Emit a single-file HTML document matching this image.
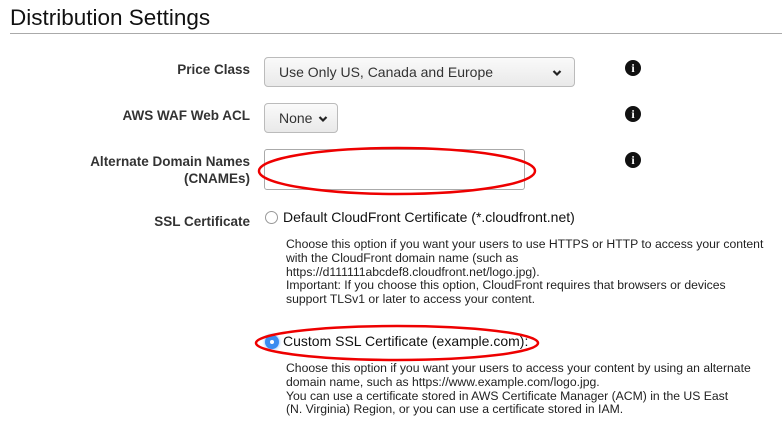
<!DOCTYPE html>
<html><head><style>
body{margin:0;width:782px;height:426px;background:#fff;font-family:"Liberation Sans",sans-serif;color:#222;position:relative;overflow:hidden}
.a{position:absolute}
.lbl{position:absolute;right:532px;font-weight:bold;font-size:13.5px;text-align:right;color:#333;line-height:17px}
.sel{position:absolute;border:1px solid #bbb;border-radius:4px;background:linear-gradient(#fafafa,#e9e9e9);font-size:14px;color:#333;box-sizing:border-box;padding-left:14px;line-height:28px}
.info{position:absolute;width:16px;height:16px;border-radius:50%;background:#111;color:#fff;font:bold 12px "Liberation Serif",serif;text-align:center;line-height:16px}
.desc{position:absolute;left:286px;font-size:12.2px;line-height:13.8px;color:#222}
.opt{position:absolute;left:283px;font-size:14px;color:#111}
</style></head><body>
<div class="a" style="left:10px;top:5px;font-size:22.5px;color:#111">Distribution Settings</div>
<div class="a" style="left:10px;top:33px;width:772px;height:1px;background:#aaa"></div>

<div class="lbl" style="top:61px">Price Class</div>
<div class="sel" style="left:264px;top:57px;width:311px;height:30px">Use Only US, Canada and Europe<svg class="a" style="right:12px;top:11px" width="10" height="8" viewBox="0 0 10 8"><path d="M1.5 2l3.5 3.5L8.5 2" stroke="#222" stroke-width="2.2" fill="none"/></svg></div>
<div class="info" style="left:625px;top:60px">i</div>

<div class="lbl" style="top:107px">AWS WAF Web ACL</div>
<div class="sel" style="left:264px;top:103px;width:74px;height:30px">None<svg class="a" style="right:9px;top:11px" width="10" height="8" viewBox="0 0 10 8"><path d="M1.5 2l3.5 3.5L8.5 2" stroke="#222" stroke-width="2.2" fill="none"/></svg></div>
<div class="info" style="left:625px;top:106px">i</div>

<div class="lbl" style="top:153px">Alternate Domain Names<br>(CNAMEs)</div>
<div class="a" style="left:264px;top:149px;width:261px;height:41px;border:1px solid #aaa;border-radius:3px;box-sizing:border-box"></div>
<div class="info" style="left:625px;top:152px">i</div>

<div class="lbl" style="top:213px">SSL Certificate</div>
<div class="a" style="left:265px;top:211px;width:13px;height:13px;border:1px solid #999;border-radius:50%;box-sizing:border-box;background:#fff"></div>
<div class="opt" style="top:209px">Default CloudFront Certificate (*.cloudfront.net)</div>
<div class="desc" style="top:238px">Choose this option if you want your users to use HTTPS or HTTP to access your content<br>with the CloudFront domain name (such as<br>https://d111111abcdef8.cloudfront.net/logo.jpg).<br>Important: If you choose this option, CloudFront requires that browsers or devices<br>support TLSv1 or later to access your content.</div>

<div class="a" style="left:265px;top:335px;width:14px;height:14px;border-radius:50%;background:#3b8cf0;box-shadow:0 0 3px #6af"></div>
<div class="a" style="left:270px;top:340px;width:4px;height:4px;border-radius:50%;background:#fff"></div>
<div class="opt" style="top:333px">Custom SSL Certificate (example.com):</div>
<div class="desc" style="top:362px">Choose this option if you want your users to access your content by using an alternate<br>domain name, such as https://www.example.com/logo.jpg.<br>You can use a certificate stored in AWS Certificate Manager (ACM) in the US East<br>(N. Virginia) Region, or you can use a certificate stored in IAM.</div>

<svg class="a" style="left:0;top:0" width="782" height="426">
<ellipse cx="397" cy="171" rx="138" ry="23" stroke="#e00" stroke-width="2.5" fill="none"/>
<ellipse cx="397" cy="343" rx="141" ry="17" stroke="#e00" stroke-width="2.5" fill="none"/>
</svg>
</body></html>
